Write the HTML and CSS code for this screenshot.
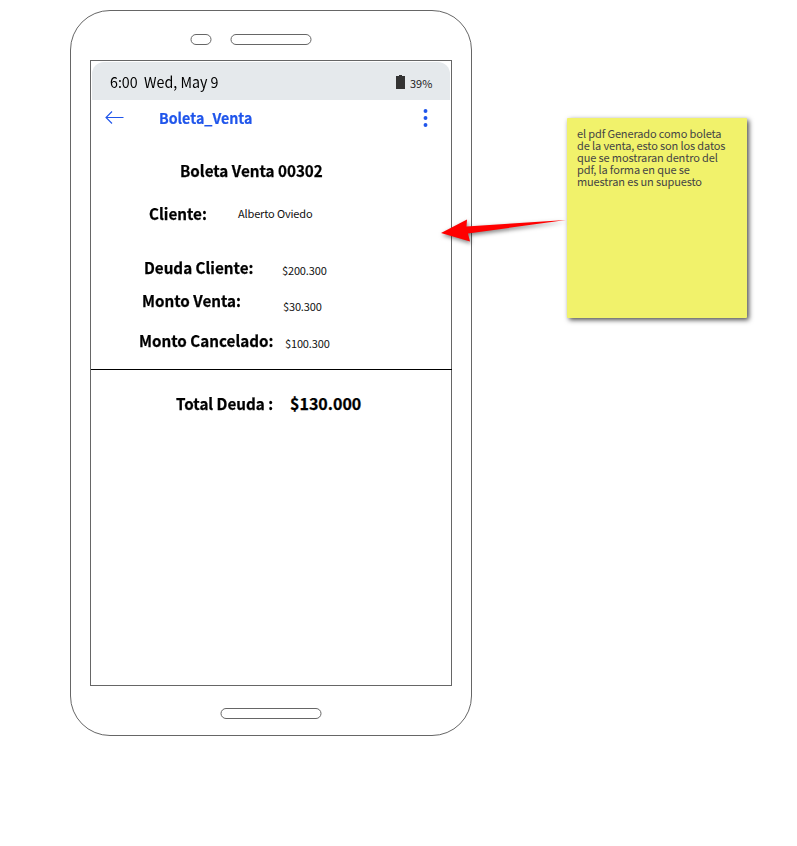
FILE: index.html
```html
<!DOCTYPE html>
<html lang="es">
<head>
<meta charset="utf-8">
<title>Boleta_Venta</title>
<link rel="stylesheet" href="styles.css">
</head>
<body>
<main class="board">
  <section class="phone">
    <div class="speakers"><span class="pill camera"></span><span class="pill speaker"></span></div>
    <div class="screen">
      <div class="status">
        <span class="clock">6:00</span><span class="date">Wed, May 9</span>
        <svg class="battery" width="9" height="14" viewBox="0 0 9 14"><path d="M3 0h3v1h3v13H0V1h3z" fill="#333"/></svg>
        <span class="percent">39%</span>
      </div>
      <header class="appbar">
        <svg class="back" width="19" height="14" viewBox="0 0 19 14"><path d="M18.500 6.500H1M7 .5L1 6.500l6 6" fill="none" stroke="#1f55eb" stroke-width="1.100"/></svg>
        <h1>Boleta_Venta</h1>
        <svg class="more" width="5" height="18" viewBox="0 0 5 18" fill="#1f55eb"><circle cx="2.500" cy="2" r="1.95"/><circle cx="2.500" cy="9" r="1.95"/><circle cx="2.500" cy="16" r="1.95"/></svg>
      </header>
      <h2 class="title">Boleta Venta 00302</h2>
      <div class="row client"><b>Cliente:</b><span>Alberto Oviedo</span></div>
      <div class="row debt"><b>Deuda Cliente:</b><span>$200.300</span></div>
      <div class="row sale"><b>Monto Venta:</b><span>$30.300</span></div>
      <div class="row paid"><b>Monto Cancelado:</b><span>$100.300</span></div>
      <hr>
      <div class="row total"><b>Total Deuda :</b><b class="sum">$130.000</b></div>
    </div>
    <span class="pill home"></span>
  </section>
  <aside class="note">el pdf Generado como boleta<br>de la venta, esto son los datos<br>que se mostraran dentro del<br>pdf, la forma en que se<br>muestran es un supuesto</aside>
  <svg class="arrow" width="140" height="50" viewBox="430 200 140 50"><path d="M441 233L467 219.500L466.500 226.500L566 220L468 233.500L470 241.500Z" fill="#f00"/></svg>
</main>
</body>
</html>
```
FILE: styles.css
```css
* { box-sizing: border-box; }
body { margin: 0; background: #fff; color: #000; font-family: "Noto Sans CJK SC", sans-serif; }
svg { display: block; flex: none; }
.board { position: relative; display: flex; align-items: flex-start; width: 797px; height: 846px; padding: 10px 0 0 70px; }
.phone { flex: none; width: 402px; height: 726px; border: 1px solid #666; border-radius: 40px; padding: 23px 19px 0; }
.speakers { display: flex; gap: 19px; padding-left: 100px; height: 26px; }
.pill { display: block; height: 11px; border: 1px solid #666; border-radius: 6px; transform: translateX(.5px); }
.camera { width: 21px; }
.speaker { width: 81px; }
.screen { width: 362px; height: 626px; border: 1px solid #666; }
.status { display: flex; align-items: center; height: 38px; margin: 1px 1px 0; padding: 0 16px 0 18px; background: #e5e9ec; border-radius: 12px 12px 0 0; white-space: nowrap; }
.clock, .date, .appbar h1, .title, .row b { transform: scaleX(.95); transform-origin: left; }
.clock, .date { font-size: 15px; line-height: 20px; margin-top: 2px; }
.clock { width: 34px; }
.battery { margin-left: auto; margin-top: 2px; }
.percent { width: 24px; margin: 4px 0 0 5px; font-size: 11px; line-height: 16px; color: #222; }
.appbar { display: flex; align-items: center; height: 36px; padding: 0 23px 0 14px; }
.appbar h1 { margin: 0 auto 1px 35px; color: #1f55eb; font-size: 15px; line-height: 20px; -webkit-text-stroke: .2px; }
.title { margin: 19px 0 13px 89px; font-size: 16px; line-height: 30px; white-space: nowrap; -webkit-text-stroke: .25px; }
.row { display: grid; height: 30px; font-size: 16px; line-height: 30px; white-space: nowrap; }
.row b { -webkit-text-stroke: .25px; }
.row span { font-size: 11px; color: #111; letter-spacing: -.15px; }
.client { grid-template-columns: 89px 1fr; margin-left: 58px; }
.debt { grid-template-columns: 138px 1fr; margin: 24px 0 0 53px; }
.debt span { padding-top: 3px; }
.sale { grid-template-columns: 141px 1fr; margin: 3px 0 0 51px; }
.sale span { padding-top: 6px; }
.paid { grid-template-columns: 146px 1fr; margin: 10px 0 0 48px; }
.paid span { padding-top: 3px; }
hr { height: 1px; margin: 14px -1px 18px 0; border: 0; background: #000; }
.total { grid-template-columns: 114px 1fr; margin-left: 85px; }
.row .sum { transform: none; }
.home { width: 101px; margin: 22px 0 0 130px; }
.note { flex: none; width: 180px; height: 200px; margin: 108px 0 0 95px; padding: 9px 10px; background: #f1f26b; border-radius: 1px; box-shadow: 2px 2px 5px rgba(0,0,0,.7); color: #444; font-size: 11px; line-height: 12px; letter-spacing: -.13px; white-space: nowrap; }
.arrow { position: absolute; left: 430px; top: 200px; filter: drop-shadow(1px 2px 2px rgba(0,0,0,.5)); }
```
